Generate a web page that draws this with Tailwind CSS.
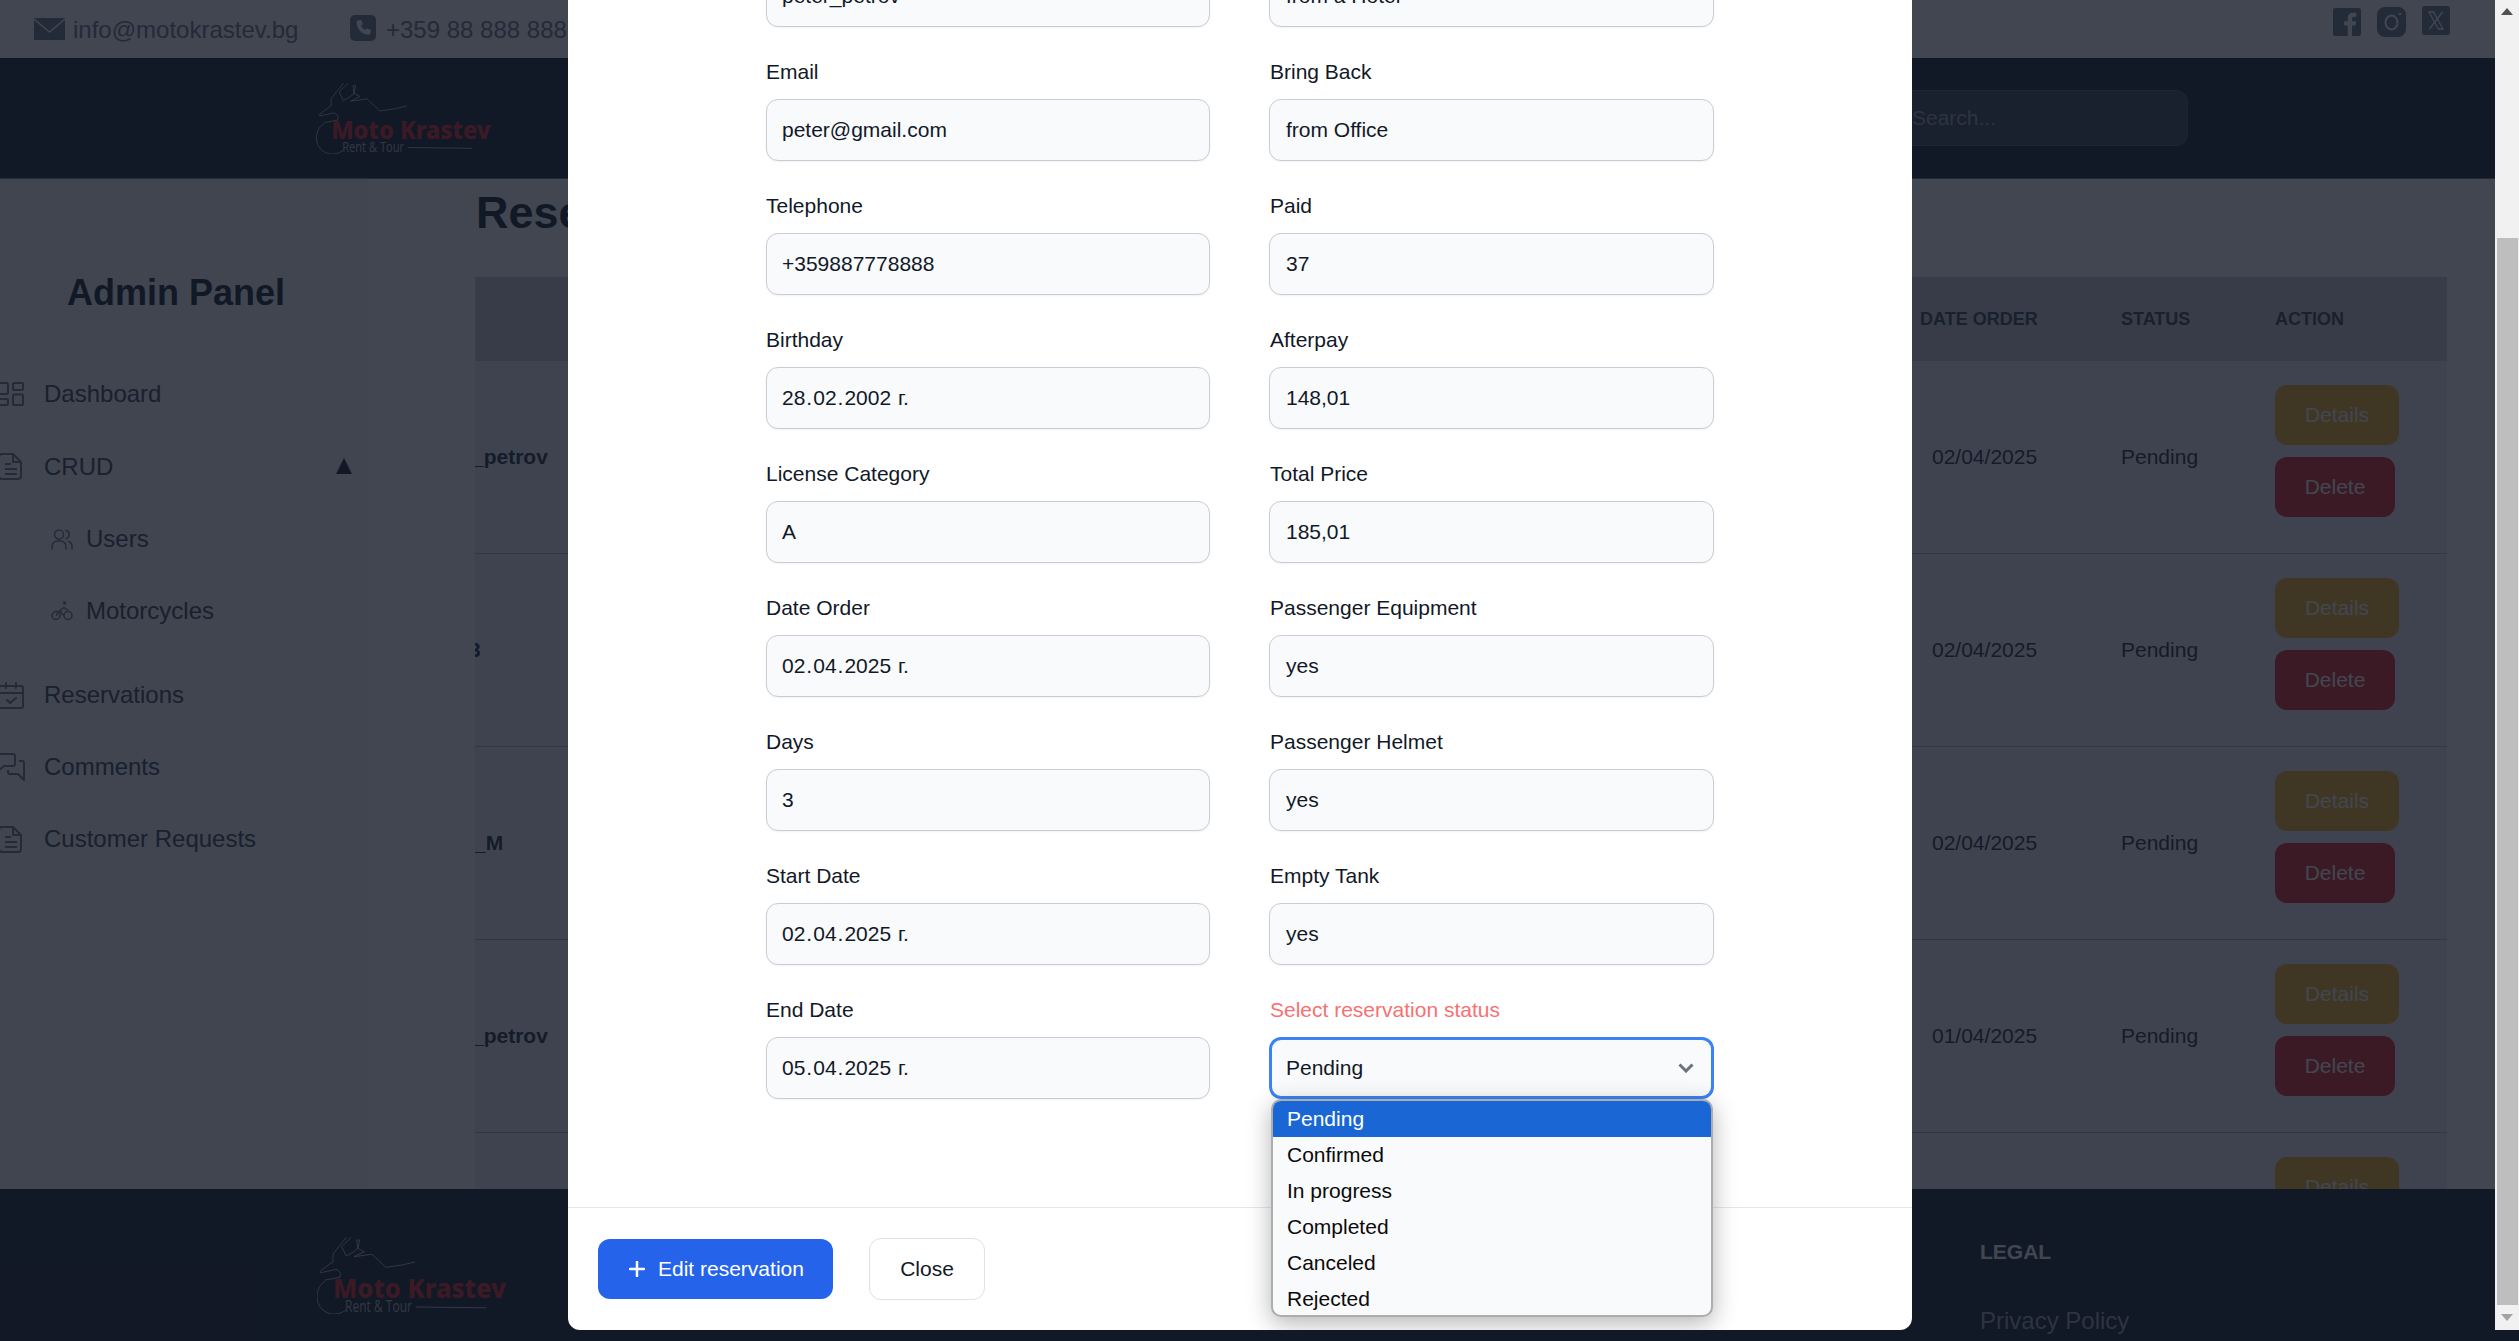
<!DOCTYPE html>
<html lang="en">
<head>
<meta charset="utf-8">
<title>Admin Panel - Reservations</title>
<script src="https://cdn.jsdelivr.net/npm/@tailwindcss/browser@4"></script>
</head>
<body class="bg-[#111928]">
<div class="relative w-[2519px] h-[1341px] overflow-hidden bg-[#111928] font-['Liberation_Sans',Arial,sans-serif] text-[21px] text-[#111928]">

  <!-- PAGE -->
  <div class="flex flex-col w-[2495px] h-[1341px] bg-white">
    <!-- top bar -->
    <div class="h-[58px] shrink-0 flex items-center pl-[34px] text-gray-500 text-[24px]">
      <svg class="w-[31px] h-[22px] shrink-0" viewBox="0 0 31 22"><rect width="31" height="22" fill="#6b7280"/><path d="M0 1l15.5 13L31 1" fill="none" stroke="#fff" stroke-width="1.4"/></svg>
      <span class="ml-[8px] w-[277px] mt-[1px]">info@motokrastev.bg</span>
      <svg class="w-[26px] h-[26px] shrink-0 -mt-[2px]" viewBox="0 0 26 26"><rect width="26" height="26" rx="5" fill="#6b7280"/><path d="M8 5.5l3-.8 2 4.3-1.8 1.6c.8 2 2.2 3.500 4.200 4.400l1.700-1.700 4 2.200-.8 3c-.3.9-1.200 1.400-2.200 1.200C11.500 18.800 7.500 14.700 6.500 7.700 6.400 6.700 7 5.800 8 5.500z" fill="#fff"/></svg>
      <span class="ml-[10px] mt-[1px]">+359 88 888 888</span>
      <div class="ml-auto mr-[45px] mb-[14px] flex items-center gap-[16px]">
        <svg class="w-[28px] h-[28px]" viewBox="0 0 28 28"><rect width="28" height="28" rx="2" fill="#6b7280"/><path d="M19 28V17.500h3.500l.6-4.200H19v-2.600c0-1.200.4-2 2.100-2h2.200V5c-.4 0-1.700-.2-3.200-.2-3.200 0-5.400 2-5.400 5.500v3H11v4.200h3.700V28z" fill="#fff"/></svg>
        <svg class="w-[29px] h-[30px]" viewBox="0 0 29 30"><rect width="29" height="30" rx="8" fill="#6b7280"/><ellipse cx="14.500" cy="15.500" rx="6" ry="7" fill="none" stroke="#fff" stroke-width="2"/><circle cx="23" cy="7" r="1.300" fill="#fff"/></svg>
        <svg class="w-[28px] h-[29px] mb-[3px]" viewBox="0 0 28 29"><rect width="28" height="29" rx="3" fill="#6b7280"/><path d="M7 6h4.500L21 23h-4.500zM20.500 6L7.500 23" fill="none" stroke="#fff" stroke-width="1.300"/></svg>
      </div>
    </div>

    <!-- nav -->
    <div class="h-[121px] shrink-0 flex items-center pl-[316px] bg-[#111928] border-b border-b-[#6b7280]">
      <svg class="w-[176px] h-[71px] shrink-0" viewBox="0 0 190 77">
        <g fill="none" stroke="#fff" stroke-width=".9" stroke-opacity=".75">
          <path d="M29.300.3L16 17v7.700L3.700 33.700v2L19.800 32.300l3.800 4-.8 4L8.300 43"/>
          <path d="M8.300 44C2 48 0 54 0 59.700 0 69 7 77 16.700 77c5 0 9-1.500 12.300-4"/>
          <path d="M34.300.3L24.700 9.700 29.300 19l7.700-4.300 3.800-3.400-1.100-8.300h3l-1.900 8.300 6.500 3.400-10.300 5 18-2.400 13.800 13 16.200-2.300 13-3"/>
        </g>
        <text x="16" y="61" font-family="'Noto Sans','Open Sans',sans-serif" font-weight="800" font-size="26" fill="#e02424" textLength="173" lengthAdjust="spacingAndGlyphs">Moto Krastev</text>
        <text x="28" y="75" font-family="'Open Sans','Noto Sans',sans-serif" font-size="16" fill="#fff" fill-opacity=".7" textLength="67" lengthAdjust="spacingAndGlyphs">Rent &amp; Tour</text>
        <path d="M99 70l70 .8" stroke="#fff" stroke-opacity=".7" fill="none"/>
      </svg>
      <div class="ml-[1370px] w-[326px] h-[56px] rounded-[12px] bg-[#374151] border border-[#4b5563] flex items-center pl-[49px] text-[#9ca3af]">Search...</div>
    </div>

    <!-- middle -->
    <div class="flex-1 min-h-0 flex overflow-hidden">
      <!-- sidebar -->
      <aside class="w-[368px] shrink-0 bg-[#f8f8f8] pt-[87px]">
        <h2 class="ml-[67px] h-[54px] leading-[54px] text-[36px] font-bold text-[#111928]">Admin Panel</h2>
        <ul class="mt-[38px] text-[24px] text-[#374151]">
          <li class="h-[72px] flex items-center">
            <svg class="w-[24px] h-[24px] shrink-0" viewBox="0 0 24 24" fill="none" stroke="#6b7280" stroke-width="2"><rect x="-1" y="1" width="9" height="11" rx="1"/><rect x="13" y="1" width="10" height="7" rx="1"/><rect x="-1" y="17" width="9" height="6" rx="1"/><rect x="13" y="12.500" width="10" height="10.500" rx="1"/></svg>
            <span class="ml-[20px]">Dashboard</span>
          </li>
          <li class="h-[73px] flex items-center relative">
            <svg class="w-[24px] h-[27px] shrink-0" viewBox="0 0 24 27" fill="none" stroke="#6b7280" stroke-width="2" stroke-linejoin="round"><path d="M-1 4a3 3 0 0 1 3-3h11l8 8v14a3 3 0 0 1-3 3H2a3 3 0 0 1-3-3z"/><path d="M13 1v8h8M5 11h6M5 16h12M5 21h12"/></svg>
            <span class="ml-[20px]">CRUD</span>
            <svg class="absolute left-[336px] top-[28px] w-[16px] h-[16px]" viewBox="0 0 16 16"><path d="M8 0l8 16H0z" fill="#111928"/></svg>
          </li>
          <li class="h-[72px] flex items-center pl-[51px]">
            <svg class="w-[22px] h-[21px] shrink-0" viewBox="0 0 22 21" fill="none" stroke="#6b7280" stroke-width="1.500" stroke-linecap="round"><circle cx="8" cy="5.500" r="4.500"/><path d="M1 20v-2.500a5.500 5.500 0 0 1 5.500-5.500h3a5.500 5.500 0 0 1 5.500 5.500V20M15 1.200a4.500 4.500 0 0 1 0 8.600M21 20v-2.500c0-2.500-1.600-4.500-3.500-5"/></svg>
            <span class="ml-[13px]">Users</span>
          </li>
          <li class="h-[72px] flex items-center pl-[51px]">
            <svg class="w-[22px] h-[20px] shrink-0" viewBox="0 0 22 20" fill="none" stroke="#6b7280" stroke-width="1.500"><circle cx="5" cy="14.500" r="4"/><circle cx="17" cy="14.500" r="4"/><circle cx="13.500" cy="2" r="1" fill="#6b7280"/><path d="M5 14.500l4-5 3.500 5M9 9.500l4-3 4 3"/></svg>
            <span class="ml-[13px]">Motorcycles</span>
          </li>
          <li class="mt-[12px] h-[72px] flex items-center">
            <svg class="w-[24px] h-[27px] shrink-0" viewBox="0 0 24 27" fill="none" stroke="#6b7280" stroke-width="2" stroke-linecap="round" stroke-linejoin="round"><rect x="-1" y="4" width="24" height="22" rx="2"/><path d="M-1 11h24M6 1v5M16 1v5M7 18l3 3 6-5"/></svg>
            <span class="ml-[20px]">Reservations</span>
          </li>
          <li class="h-[72px] flex items-center">
            <svg class="w-[24px] h-[28px] shrink-0 overflow-visible" viewBox="0 0 24 28" fill="none" stroke="#6b7280" stroke-width="2" stroke-linejoin="round"><path d="M-1 1h14a2 2 0 0 1 2 2v8a2 2 0 0 1-2 2H4l-5 4"/><path d="M19 8h3a2 2 0 0 1 2 2v17l-6-6H10a2 2 0 0 1-2-2v-2"/></svg>
            <span class="ml-[20px]">Comments</span>
          </li>
          <li class="h-[72px] flex items-center">
            <svg class="w-[24px] h-[27px] shrink-0" viewBox="0 0 24 27" fill="none" stroke="#6b7280" stroke-width="2" stroke-linejoin="round"><path d="M-1 4a3 3 0 0 1 3-3h11l8 8v14a3 3 0 0 1-3 3H2a3 3 0 0 1-3-3z"/><path d="M13 1v8h8M5 11h6M5 16h12M5 21h12"/></svg>
            <span class="ml-[20px]">Customer Requests</span>
          </li>
        </ul>
      </aside>

      <!-- main -->
      <main class="flex-1 min-w-0 pl-[107px] pr-[48.500px] pt-[7px]">
        <h1 class="h-[54px] leading-[54px] text-[45px] font-bold text-[#111928] mb-[37px] pl-[1px]">Reservations</h1>
        <div class="overflow-hidden">
          <div class="h-[84px] flex items-center bg-[#d0cdd6] text-[18px] font-bold uppercase text-[#374151]">
            <div class="flex-1"></div>
            <div class="w-[201px]">Date order</div>
            <div class="w-[154px]">Status</div>
            <div class="w-[171.500px]">Action</div>
          </div>

          <div class="h-[193px] flex items-center bg-[#f1f0f3] border-b border-b-[#b4b2ba]">
            <div class="flex-1 min-w-0 overflow-hidden font-bold text-[#1f2937]"><span class="block -ml-[3px]">_petrov</span></div>
            <div class="w-[201px] pl-[12px] text-[#1f2937]">02/04/2025</div>
            <div class="w-[154px] text-[#1f2937]">Pending</div>
            <div class="w-[171.500px] flex flex-col items-start gap-[12px] self-start pt-[24px] text-white">
              <div class="w-[124px] h-[60px] rounded-[12px] bg-[#f5b01e] flex items-center justify-center">Details</div>
              <div class="w-[120px] h-[60px] rounded-[12px] bg-[#e02424] flex items-center justify-center">Delete</div>
            </div>
          </div>
          <div class="h-[193px] flex items-center bg-[#f1f0f3] border-b border-b-[#b4b2ba]">
            <div class="flex-1 min-w-0 overflow-hidden font-bold text-[#1f2937]"><span class="block -ml-[6px]">3</span></div>
            <div class="w-[201px] pl-[12px] text-[#1f2937]">02/04/2025</div>
            <div class="w-[154px] text-[#1f2937]">Pending</div>
            <div class="w-[171.500px] flex flex-col items-start gap-[12px] self-start pt-[24px] text-white">
              <div class="w-[124px] h-[60px] rounded-[12px] bg-[#f5b01e] flex items-center justify-center">Details</div>
              <div class="w-[120px] h-[60px] rounded-[12px] bg-[#e02424] flex items-center justify-center">Delete</div>
            </div>
          </div>
          <div class="h-[193px] flex items-center bg-[#f1f0f3] border-b border-b-[#b4b2ba]">
            <div class="flex-1 min-w-0 overflow-hidden font-bold text-[#1f2937]"><span class="block -ml-[1px]">_M</span></div>
            <div class="w-[201px] pl-[12px] text-[#1f2937]">02/04/2025</div>
            <div class="w-[154px] text-[#1f2937]">Pending</div>
            <div class="w-[171.500px] flex flex-col items-start gap-[12px] self-start pt-[24px] text-white">
              <div class="w-[124px] h-[60px] rounded-[12px] bg-[#f5b01e] flex items-center justify-center">Details</div>
              <div class="w-[120px] h-[60px] rounded-[12px] bg-[#e02424] flex items-center justify-center">Delete</div>
            </div>
          </div>
          <div class="h-[193px] flex items-center bg-[#f1f0f3] border-b border-b-[#b4b2ba]">
            <div class="flex-1 min-w-0 overflow-hidden font-bold text-[#1f2937]"><span class="block -ml-[3px]">_petrov</span></div>
            <div class="w-[201px] pl-[12px] text-[#1f2937]">01/04/2025</div>
            <div class="w-[154px] text-[#1f2937]">Pending</div>
            <div class="w-[171.500px] flex flex-col items-start gap-[12px] self-start pt-[24px] text-white">
              <div class="w-[124px] h-[60px] rounded-[12px] bg-[#f5b01e] flex items-center justify-center">Details</div>
              <div class="w-[120px] h-[60px] rounded-[12px] bg-[#e02424] flex items-center justify-center">Delete</div>
            </div>
          </div>
          <div class="h-[193px] flex bg-[#f1f0f3]">
            <div class="flex-1"></div>
            <div class="w-[201px]"></div>
            <div class="w-[154px]"></div>
            <div class="w-[171.500px] pt-[24px] text-white">
              <div class="w-[124px] h-[60px] rounded-[12px] bg-[#f5b01e] flex items-center justify-center">Details</div>
            </div>
          </div>
        </div>
      </main>
    </div>

    <!-- footer -->
    <footer class="h-[152px] shrink-0 bg-[#111928] overflow-hidden flex pl-[317px] pt-[48px]">
      <svg class="w-[190px] h-[77px] shrink-0" viewBox="0 0 190 77">
        <g fill="none" stroke="#fff" stroke-width=".9" stroke-opacity=".75">
          <path d="M29.300.3L16 17v7.700L3.700 33.700v2L19.800 32.300l3.800 4-.8 4L8.300 43"/>
          <path d="M8.300 44C2 48 0 54 0 59.700 0 69 7 77 16.700 77c5 0 9-1.500 12.300-4"/>
          <path d="M34.300.3L24.700 9.700 29.300 19l7.700-4.300 3.800-3.400-1.100-8.300h3l-1.900 8.300 6.500 3.400-10.300 5 18-2.400 13.800 13 16.200-2.300 13-3"/>
        </g>
        <text x="16" y="61" font-family="'Noto Sans','Open Sans',sans-serif" font-weight="800" font-size="26" fill="#e02424" textLength="173" lengthAdjust="spacingAndGlyphs">Moto Krastev</text>
        <text x="28" y="75" font-family="'Open Sans','Noto Sans',sans-serif" font-size="16" fill="#fff" fill-opacity=".7" textLength="67" lengthAdjust="spacingAndGlyphs">Rent &amp; Tour</text>
        <path d="M99 70l70 .8" stroke="#fff" stroke-opacity=".7" fill="none"/>
      </svg>
      <div class="ml-[1473px] -mt-[1px]">
        <div class="h-[32px] leading-[32px] font-bold text-white">LEGAL</div>
        <div class="mt-[35px] h-[36px] leading-[36px] text-[24px] text-[#9ca3af]">Privacy Policy</div>
      </div>
    </footer>
  </div>

  <!-- OVERLAY -->
  <div class="absolute inset-0 bg-[#121826]/80"></div>

  <!-- SCROLLBAR -->
  <div class="absolute right-0 top-0 w-[24px] h-[1330px] bg-[#f1f1f1] flex flex-col items-center">
    <svg class="mt-[8px] w-[12px] h-[7px] shrink-0" viewBox="0 0 12 7"><path d="M6 0l6 7H0z" fill="#505050"/></svg>
    <div class="mt-[223px] ml-[1px] w-[21px] h-[1067px] bg-[#bebebe]"></div>
    <svg class="mt-[9px] w-[12px] h-[7px] shrink-0" viewBox="0 0 12 7"><path d="M0 0h12L6 7z" fill="#a3a3a3"/></svg>
  </div>

  <!-- MODAL -->
  <div class="absolute left-[568px] top-0 w-[1344px] h-[1330px] bg-white rounded-b-[12px] overflow-hidden flex flex-col">
    <div class="flex-1 min-h-0 overflow-hidden pl-[198px]">
      <div class="-mt-[79px] grid grid-cols-[444px_445px] gap-x-[59px] gap-y-[28px]">
        <div><div class="h-[32px] leading-[34px] mb-[12px]">Username</div><div class="h-[62px] flex items-center pl-[15px] rounded-[12px] bg-[#f9fafb] border border-[#c9ccd6] shadow-xs">peter_petrov</div></div>
        <div><div class="h-[32px] leading-[34px] mb-[12px] pl-[1px]">Take From</div><div class="h-[62px] flex items-center pl-[16px] rounded-[12px] bg-[#f9fafb] border border-[#c9ccd6] shadow-xs">from a Hotel</div></div>
        <div><div class="h-[32px] leading-[34px] mb-[12px]">Email</div><div class="h-[62px] flex items-center pl-[15px] rounded-[12px] bg-[#f9fafb] border border-[#c9ccd6] shadow-xs">peter@gmail.com</div></div>
        <div><div class="h-[32px] leading-[34px] mb-[12px] pl-[1px]">Bring Back</div><div class="h-[62px] flex items-center pl-[16px] rounded-[12px] bg-[#f9fafb] border border-[#c9ccd6] shadow-xs">from Office</div></div>
        <div><div class="h-[32px] leading-[34px] mb-[12px]">Telephone</div><div class="h-[62px] flex items-center pl-[15px] rounded-[12px] bg-[#f9fafb] border border-[#c9ccd6] shadow-xs">+359887778888</div></div>
        <div><div class="h-[32px] leading-[34px] mb-[12px] pl-[1px]">Paid</div><div class="h-[62px] flex items-center pl-[16px] rounded-[12px] bg-[#f9fafb] border border-[#c9ccd6] shadow-xs">37</div></div>
        <div><div class="h-[32px] leading-[34px] mb-[12px]">Birthday</div><div class="h-[62px] flex items-center pl-[15px] rounded-[12px] bg-[#f9fafb] border border-[#c9ccd6] shadow-xs whitespace-pre">28<span class="mx-[1px]">.</span>02<span class="mx-[1px]">.</span>2002<span class="ml-[1px]"> г.</span></div></div>
        <div><div class="h-[32px] leading-[34px] mb-[12px] pl-[1px]">Afterpay</div><div class="h-[62px] flex items-center pl-[16px] rounded-[12px] bg-[#f9fafb] border border-[#c9ccd6] shadow-xs">148,01</div></div>
        <div><div class="h-[32px] leading-[34px] mb-[12px]">License Category</div><div class="h-[62px] flex items-center pl-[15px] rounded-[12px] bg-[#f9fafb] border border-[#c9ccd6] shadow-xs">A</div></div>
        <div><div class="h-[32px] leading-[34px] mb-[12px] pl-[1px]">Total Price</div><div class="h-[62px] flex items-center pl-[16px] rounded-[12px] bg-[#f9fafb] border border-[#c9ccd6] shadow-xs">185,01</div></div>
        <div><div class="h-[32px] leading-[34px] mb-[12px]">Date Order</div><div class="h-[62px] flex items-center pl-[15px] rounded-[12px] bg-[#f9fafb] border border-[#c9ccd6] shadow-xs whitespace-pre">02<span class="mx-[1px]">.</span>04<span class="mx-[1px]">.</span>2025<span class="ml-[1px]"> г.</span></div></div>
        <div><div class="h-[32px] leading-[34px] mb-[12px] pl-[1px]">Passenger Equipment</div><div class="h-[62px] flex items-center pl-[16px] rounded-[12px] bg-[#f9fafb] border border-[#c9ccd6] shadow-xs">yes</div></div>
        <div><div class="h-[32px] leading-[34px] mb-[12px]">Days</div><div class="h-[62px] flex items-center pl-[15px] rounded-[12px] bg-[#f9fafb] border border-[#c9ccd6] shadow-xs">3</div></div>
        <div><div class="h-[32px] leading-[34px] mb-[12px] pl-[1px]">Passenger Helmet</div><div class="h-[62px] flex items-center pl-[16px] rounded-[12px] bg-[#f9fafb] border border-[#c9ccd6] shadow-xs">yes</div></div>
        <div><div class="h-[32px] leading-[34px] mb-[12px]">Start Date</div><div class="h-[62px] flex items-center pl-[15px] rounded-[12px] bg-[#f9fafb] border border-[#c9ccd6] shadow-xs whitespace-pre">02<span class="mx-[1px]">.</span>04<span class="mx-[1px]">.</span>2025<span class="ml-[1px]"> г.</span></div></div>
        <div><div class="h-[32px] leading-[34px] mb-[12px] pl-[1px]">Empty Tank</div><div class="h-[62px] flex items-center pl-[16px] rounded-[12px] bg-[#f9fafb] border border-[#c9ccd6] shadow-xs">yes</div></div>
        <div><div class="h-[32px] leading-[34px] mb-[12px]">End Date</div><div class="h-[62px] flex items-center pl-[15px] rounded-[12px] bg-[#f9fafb] border border-[#c9ccd6] shadow-xs whitespace-pre">05<span class="mx-[1px]">.</span>04<span class="mx-[1px]">.</span>2025<span class="ml-[1px]"> г.</span></div></div>
        <div>
          <div class="h-[32px] leading-[34px] mb-[12px] pl-[1px] text-[#f87171]">Select reservation status</div>
          <div class="h-[62px] flex items-center justify-between pl-[14px] pr-[17px] rounded-[12px] bg-[#f9fafb] border-[3px] border-[#3b82f6]">
            <span>Pending</span>
            <svg class="w-[16px] h-[10px]" viewBox="0 0 16 10" fill="none"><path d="M1.500 1.500L8 8l6.500-6.500" stroke="#6b7280" stroke-width="3"/></svg>
          </div>
        </div>
      </div>
    </div>
    <div class="h-[123px] shrink-0 border-t border-t-[#e5e7eb] flex items-center pl-[30px] gap-[36px]">
      <div class="w-[235px] h-[60px] rounded-[12px] bg-[#2563eb] text-white flex items-center pl-[31px]">
        <svg class="w-[16px] h-[16px] shrink-0" viewBox="0 0 16 16"><path d="M8 1v14M1 8h14" stroke="#fff" stroke-width="2.500" stroke-linecap="round"/></svg>
        <span class="ml-[13px]">Edit reservation</span>
      </div>
      <div class="w-[116px] h-[62px] rounded-[12px] bg-white border border-[#dfe1e6] flex items-center justify-center">Close</div>
    </div>

    <!-- open select list -->
    <div class="absolute left-[703px] top-[1099px] w-[442px] h-[218px] rounded-[10px] bg-[#f9fafb] border-2 border-[#adadad] overflow-hidden shadow-[0_6px_24px_rgba(0,0,0,0.3)] text-[#0b0b0b]">
      <div class="h-[36px] flex items-center pl-[14px] bg-[#1a66d4] text-white">Pending</div>
      <div class="h-[36px] flex items-center pl-[14px]">Confirmed</div>
      <div class="h-[36px] flex items-center pl-[14px]">In progress</div>
      <div class="h-[36px] flex items-center pl-[14px]">Completed</div>
      <div class="h-[36px] flex items-center pl-[14px]">Canceled</div>
      <div class="h-[36px] flex items-center pl-[14px]">Rejected</div>
    </div>
  </div>
</div>
</body>
</html>
